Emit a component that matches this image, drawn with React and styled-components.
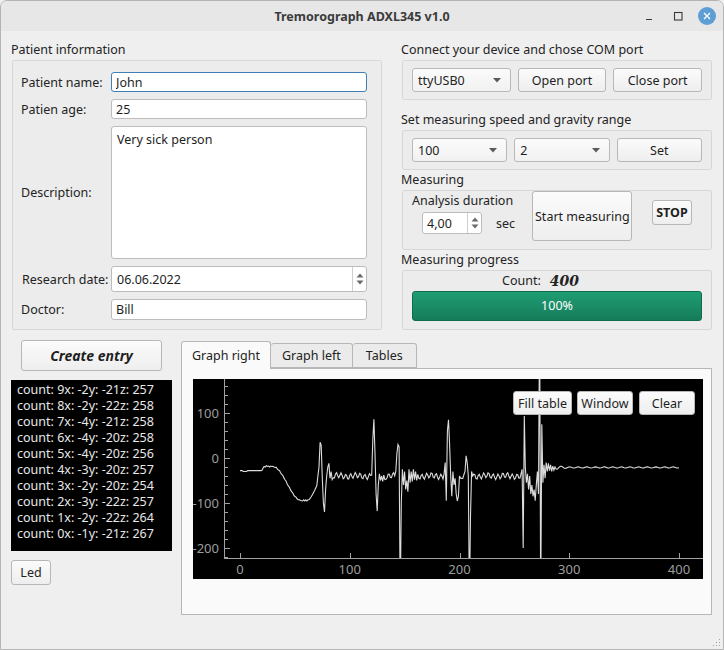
import React from "react";
import styled, { createGlobalStyle, css } from "styled-components";

const GlobalStyle = createGlobalStyle`
  html, body { margin: 0; padding: 0; background: #efefef; }
  body {
    font-family: "Noto Sans", "DejaVu Sans", sans-serif;
    font-size: 12.5px;
    color: #232323;
  }
  * { box-sizing: border-box; }
`;

const Window = styled.div`
  width: 724px;
  height: 650px;
  display: flex;
  flex-direction: column;
  border: 1px solid #b4b4b4;
  border-radius: 7px 7px 0 0;
  background: #efefef;
  overflow: hidden;
  position: relative;
`;

const TitleBar = styled.div`
  height: 30px;
  flex: none;
  display: grid;
  grid-template-columns: 1fr auto 1fr;
  align-items: center;
  background: #e7e7e7;
`;

const Title = styled.div`
  grid-column: 2;
  font-weight: 700;
  font-size: 12.5px;
  color: #3b3b3b;
`;

const WinControls = styled.div`
  justify-self: end;
  display: flex;
  align-items: center;
  gap: 11px;
  padding-right: 7px;
`;

const CtrlIcon = styled.span`
  width: 18px;
  height: 18px;
  display: flex;
  align-items: center;
  justify-content: center;
  border-radius: 50%;
  background: ${({ $close }) => ($close ? "#5d9fd5" : "transparent")};
`;

const Body = styled.div`
  flex: 1;
  display: flex;
  flex-direction: column;
  gap: 10px;
  padding: 9px 11px 0 10px;
`;

const TopRow = styled.div`
  display: flex;
  gap: 19px;
`;

const Panel = styled.div`
  width: ${({ $w }) => $w}px;
  display: flex;
  flex-direction: column;
`;

const SectionTitle = styled.div`
  height: 20px;
  line-height: 19px;
  white-space: nowrap;
`;

const GroupBox = styled.div`
  border: 1px solid #d7d7d7;
  border-radius: 2px;
  background: #ececec;
  margin-left: 1px;
  margin-bottom: ${({ $mb }) => $mb || 0}px;
`;

const FormGrid = styled(GroupBox)`
  display: grid;
  grid-template-columns: 90px 1fr;
  grid-template-rows: 20px 20px 133px 26px 21px;
  row-gap: 7px;
  align-items: center;
  padding: 11px 14px 9px 8px;
`;

const FieldLabel = styled.label`
  white-space: nowrap;
  padding-left: ${({ $indent }) => $indent || 0}px;
`;

const inputBase = css`
  font: inherit;
  color: #1e1e1e;
  background: #fff;
  border: 1px solid #bcbcbc;
  border-radius: 3px;
  outline: none;
`;

const TextInput = styled.input`
  ${inputBase};
  height: 100%;
  width: 100%;
  padding: 0 4px;
  border-color: ${({ $focused }) => ($focused ? "#3f7fb5" : "#bcbcbc")};
`;

const TextArea = styled.textarea`
  ${inputBase};
  height: 100%;
  width: 100%;
  resize: none;
  padding: 4px 5px;
`;

const SpinWrap = styled.div`
  ${inputBase};
  display: flex;
  height: ${({ $h }) => $h}px;
  width: ${({ $w }) => ($w ? `${$w}px` : "100%")};
  margin-left: ${({ $ml }) => $ml || 0}px;
`;

const SpinValue = styled.div`
  flex: 1;
  display: flex;
  align-items: center;
  padding-left: ${({ $pl }) => $pl || 4}px;
`;

const SpinArrows = styled.div`
  width: 14px;
  border-left: 1px solid #cfcfcf;
  display: flex;
  align-items: center;
  justify-content: center;
`;

const Row = styled(GroupBox)`
  display: flex;
  gap: 7px;
  padding: 7px 9px 7px 9px;
`;

const Combo = styled.div`
  flex: 1;
  height: 24px;
  display: flex;
  align-items: center;
  justify-content: space-between;
  padding: 0 9px 0 5px;
  border: 1px solid #b9b9b9;
  border-radius: 3px;
  background: linear-gradient(#fbfbfb, #f1f1f1);
`;

const Button = styled.button`
  font: inherit;
  font-size: ${({ $size }) => $size || 12.5}px;
  font-weight: ${({ $bold }) => ($bold ? 700 : 400)};
  font-style: ${({ $italic }) => ($italic ? "italic" : "normal")};
  color: #1e1e1e;
  flex: ${({ $flex }) => ($flex ? 1 : "none")};
  width: ${({ $w }) => ($w ? `${$w}px` : "auto")};
  height: ${({ $h }) => $h || 24}px;
  margin: ${({ $m }) => $m || 0};
  padding: 0 2px;
  border: 1px solid #b7b7b7;
  border-radius: 3px;
  background: linear-gradient(#fbfbfb, #eeeeee);
  white-space: nowrap;
`;

const MeasureBox = styled(GroupBox)`
  height: 60px;
  display: flex;
  align-items: flex-start;
  padding: 0 9px;
`;

const DurationCol = styled.div`
  width: 120px;
  display: flex;
  flex-direction: column;
  gap: 3px;
  padding-top: 1px;
`;

const DurationRow = styled.div`
  display: flex;
  align-items: center;
  gap: 14px;
`;

const ProgressBox = styled(GroupBox)`
  height: 60px;
  padding: 0 9px 8px;
  display: flex;
  flex-direction: column;
`;

const CountRow = styled.div`
  height: 20px;
  display: flex;
  align-items: center;
  gap: 9px;
  padding-left: 90px;
`;

const CountValue = styled.span`
  font-family: "DejaVu Serif", "Liberation Serif", serif;
  font-weight: 700;
  font-style: italic;
  font-size: 14px;
`;

const Progress = styled.div`
  height: 31px;
  display: flex;
  align-items: center;
  justify-content: center;
  color: #fff;
  border: 1px solid #0f6c4c;
  border-radius: 3px;
  background: linear-gradient(#1f9d72, #157c5a);
`;

const BottomRow = styled.div`
  display: flex;
  gap: 9px;
`;

const LeftCol = styled.div`
  width: 161px;
  display: flex;
  flex-direction: column;
  align-items: flex-start;
  gap: 9px;
`;

const LogList = styled.div`
  width: 161px;
  height: 171px;
  background: #000;
  color: #e8e8e8;
  padding: 2px 6px;
  line-height: 16px;
`;

const Tabs = styled.div`
  width: 531px;
  display: flex;
  flex-direction: column;
`;

const TabBar = styled.div`
  display: flex;
  align-items: flex-end;
  height: 28px;
`;

const Tab = styled.div`
  height: ${({ $active }) => ($active ? 28 : 25)}px;
  padding: 0 ${({ $pad }) => $pad}px;
  display: flex;
  align-items: center;
  border: 1px solid #b7b7b7;
  border-bottom: ${({ $active }) => ($active ? "none" : "1px solid #b7b7b7")};
  border-left: ${({ $first, $active }) => ($first || $active ? "1px solid #b7b7b7" : "none")};
  border-radius: 3px 3px 0 0;
  background: ${({ $active }) => ($active ? "#fafafa" : "#ebebeb")};
  position: relative;
  z-index: ${({ $active }) => ($active ? 1 : 0)};
  margin-bottom: ${({ $active }) => ($active ? -1 : 0)}px;
`;

const TabPane = styled.div`
  height: 247px;
  background: #fafafa;
  border: 1px solid #b7b7b7;
  padding: 10px 8px 0 11px;
`;

const GraphBox = styled.div`
  position: relative;
  width: 510px;
  height: 200px;
  background: #000;
`;

const GraphButtons = styled.div`
  position: absolute;
  top: 12px;
  right: 8px;
  display: flex;
  gap: 5px;
`;

const Grip = styled.svg`
  position: absolute;
  right: 2px;
  bottom: 2px;
`;

const Caret = () => (
  <svg width="8" height="5" viewBox="0 0 8 5">
    <path d="M0 0 L8 0 L4 4.5 Z" fill="#5a5a5a" />
  </svg>
);

const UpDown = () => (
  <svg width="8" height="14" viewBox="0 0 8 14">
    <path d="M0.5 5.5 L4 1.5 L7.5 5.5 Z" fill="#6a6a6a" />
    <path d="M0.5 8.5 L4 12.5 L7.5 8.5 Z" fill="#6a6a6a" />
  </svg>
);

const hump = [-27, -23, -19, -20, -17, -19, -18, -20, -18, -19];

const base = (x) => {
  if (x < 20) return x >= 3 && x <= 6 ? -30 : -28;
  if (x < 30) return hump[x - 20];
  if (x <= 56) {
    const t = (x - 30) / 26;
    return -20 - (75 * (1 - Math.cos(Math.PI * t))) / 2 + (x % 3 === 0 ? 1.5 : 0);
  }
  if (x <= 62) return -94 + (x % 2 ? -1.5 : 1);
  if (x < 72) return -94 + 45 * ((x - 62) / 10) ** 1.4;
  if (x < 288) return -40 + 6 * Math.sin(x * 1.45) + 2 * Math.sin(x * 0.37);
  const decay = Math.max(0, (300 - x) / 12);
  return -21 + (1.2 + 3 * decay) * Math.sin(x * 0.8);
};

const spikes = {
  71: -40, 72: -20, 73: 35, 74: 28, 75: -45, 76: -100, 77: -120, 78: -70, 79: -40,
  80: -20, 81: -12, 82: -45, 83: -30, 84: -48,
  120: -38, 121: 40, 122: 86, 123: 10, 124: -80, 125: -118, 126: -60, 127: -35,
  128: -50, 129: -40, 130: -52, 131: -38, 132: -48,
  142: -30, 143: 10, 144: 30, 145: 25, 146: -320, 147: -100, 148: -25, 149: -60,
  150: -30, 151: -70, 152: -50, 153: -75, 154: -25, 155: -55, 156: -30, 157: -52,
  158: -25, 159: -48, 160: -30, 161: -50,
  186: -35, 187: -10, 188: -95, 189: 60, 190: 85, 191: 30, 192: -40, 193: -85,
  194: -30, 195: -60, 196: -45, 197: -80, 198: -95, 199: -85, 200: -40, 201: -45,
  205: -30, 206: 5, 207: -10, 208: -40, 209: -320, 210: -130, 211: -30, 212: -40,
  256: -35, 257: -25, 258: -200, 259: 93, 260: -20, 261: -55, 262: -35, 263: -70,
  264: -40, 265: -80, 266: -60, 267: -85, 268: -70, 269: -95, 270: -60, 271: -30,
  272: -80, 273: 330, 274: -330, 275: 75, 276: -55, 277: -15, 278: -45, 279: -10,
  280: -30, 281: -12, 282: -28, 283: -15, 284: -30, 285: -18, 286: -27, 287: -20,
};

const signal = Array.from({ length: 401 }, (_, x) => [x, spikes[x] ?? base(x)]);

const toX = (v) => 47 + v * 1.0975;
const toY = (v) => 79 - v * 0.45;

const Plot = () => {
  const pts = signal.map(([x, y]) => `${toX(x).toFixed(1)},${toY(y).toFixed(1)}`).join(" ");
  const yTicks = [];
  for (let v = -220; v <= 160; v += 20) yTicks.push(v);
  return (
    <svg width="510" height="200" viewBox="0 0 510 200">
      <defs>
        <clipPath id="plotArea">
          <rect x="31" y="0" width="479" height="179" />
        </clipPath>
      </defs>
      <g stroke="#a2a2a2" strokeWidth="1" shapeRendering="crispEdges">
        <line x1="31.5" y1="0" x2="31.5" y2="179.5" />
        <line x1="31" y1="179.5" x2="510" y2="179.5" />
        {yTicks.map((v) => (
          <line key={v} x1="31.5" x2={v % 100 === 0 ? 37 : 34.5} y1={Math.round(toY(v)) + 0.5} y2={Math.round(toY(v)) + 0.5} />
        ))}
        {[0, 100, 200, 300, 400].map((v) => (
          <line key={v} x1={Math.round(toX(v)) + 0.5} x2={Math.round(toX(v)) + 0.5} y1="179" y2="174" />
        ))}
      </g>
      <g fill="#9d9d9d" fontFamily="Noto Sans, DejaVu Sans, sans-serif" fontSize="13">
        {[100, 0, -100, -200].map((v) => (
          <text key={v} x="26" y={toY(v) + 4.5} textAnchor="end">{v}</text>
        ))}
        {[0, 100, 200, 300, 400].map((v) => (
          <text key={v} x={toX(v)} y="195" textAnchor="middle">{v}</text>
        ))}
      </g>
      <polyline points={pts} fill="none" stroke="#dcdcdc" strokeWidth="1.1" clipPath="url(#plotArea)" />
    </svg>
  );
};

const logLines = [
  "count: 9x: -2y: -21z: 257",
  "count: 8x: -2y: -22z: 258",
  "count: 7x: -4y: -21z: 258",
  "count: 6x: -4y: -20z: 258",
  "count: 5x: -4y: -20z: 256",
  "count: 4x: -3y: -20z: 257",
  "count: 3x: -2y: -20z: 254",
  "count: 2x: -3y: -22z: 257",
  "count: 1x: -2y: -22z: 264",
  "count: 0x: -1y: -21z: 267",
];

export default function App() {
  return (
    <>
      <GlobalStyle />
      <Window>
        <TitleBar>
          <Title>Tremorograph ADXL345 v1.0</Title>
          <WinControls>
            <CtrlIcon>
              <svg width="10" height="10" viewBox="0 0 10 10">
                <line x1="2" y1="8.5" x2="8" y2="8.5" stroke="#3a3a3a" strokeWidth="1.2" />
              </svg>
            </CtrlIcon>
            <CtrlIcon>
              <svg width="10" height="10" viewBox="0 0 10 10">
                <rect x="1.5" y="1.5" width="7.5" height="7.5" fill="none" stroke="#3a3a3a" strokeWidth="1.1" />
              </svg>
            </CtrlIcon>
            <CtrlIcon $close>
              <svg width="10" height="10" viewBox="0 0 10 10">
                <path d="M2 2 L8 8 M8 2 L2 8" stroke="#fff" strokeWidth="1.3" />
              </svg>
            </CtrlIcon>
          </WinControls>
        </TitleBar>

        <Body>
          <TopRow>
            <Panel $w={371}>
              <SectionTitle>Patient information</SectionTitle>
              <FormGrid>
                <FieldLabel>Patient name:</FieldLabel>
                <TextInput defaultValue="John" $focused />
                <FieldLabel>Patien age:</FieldLabel>
                <TextInput defaultValue="25" />
                <FieldLabel>Description:</FieldLabel>
                <TextArea defaultValue="Very sick person" />
                <FieldLabel $indent={1}>Research date:</FieldLabel>
                <SpinWrap $h={26}>
                  <SpinValue $pl={5}>06.06.2022</SpinValue>
                  <SpinArrows>
                    <UpDown />
                  </SpinArrows>
                </SpinWrap>
                <FieldLabel>Doctor:</FieldLabel>
                <TextInput defaultValue="Bill" />
              </FormGrid>
            </Panel>

            <Panel $w={311}>
              <SectionTitle>Connect your device and chose COM port</SectionTitle>
              <Row $mb={10}>
                <Combo>
                  ttyUSB0
                  <Caret />
                </Combo>
                <Button $flex>Open port</Button>
                <Button $flex>Close port</Button>
              </Row>

              <SectionTitle>Set measuring speed and gravity range</SectionTitle>
              <Row>
                <Combo>
                  100
                  <Caret />
                </Combo>
                <Combo>
                  2
                  <Caret />
                </Combo>
                <Button $flex>Set</Button>
              </Row>

              <SectionTitle>Measuring</SectionTitle>
              <MeasureBox>
                <DurationCol>
                  <span>Analysis duration</span>
                  <DurationRow>
                    <SpinWrap $h={22} $w={60} $ml={10}>
                      <SpinValue>4,00</SpinValue>
                      <SpinArrows>
                        <UpDown />
                      </SpinArrows>
                    </SpinWrap>
                    <span>sec</span>
                  </DurationRow>
                </DurationCol>
                <Button $w={100} $h={50}>Start measuring</Button>
                <Button $w={40} $h={25} $bold $m="9px 0 0 20px">STOP</Button>
              </MeasureBox>

              <SectionTitle>Measuring progress</SectionTitle>
              <ProgressBox>
                <CountRow>
                  <span>Count:</span>
                  <CountValue>400</CountValue>
                </CountRow>
                <Progress>100%</Progress>
              </ProgressBox>
            </Panel>
          </TopRow>

          <BottomRow>
            <LeftCol>
              <Button $w={141} $h={31} $size={14} $bold $italic $m="0 0 0 10px">
                Create entry
              </Button>
              <LogList>
                {logLines.map((l) => (
                  <div key={l}>{l}</div>
                ))}
              </LogList>
              <Button $w={40} $h={25}>Led</Button>
            </LeftCol>

            <Tabs>
              <TabBar>
                <Tab $active $first $pad={10}>Graph right</Tab>
                <Tab $pad={11}>Graph left</Tab>
                <Tab $pad={13}>Tables</Tab>
              </TabBar>
              <TabPane>
                <GraphBox>
                  <Plot />
                  <GraphButtons>
                    <Button $w={59}>Fill table</Button>
                    <Button $w={56}>Window</Button>
                    <Button $w={56} $m="0 0 0 1px">Clear</Button>
                  </GraphButtons>
                </GraphBox>
              </TabPane>
            </Tabs>
          </BottomRow>
        </Body>

        <Grip width="10" height="10" viewBox="0 0 10 10">
          {[[8, 2], [8, 5], [5, 5], [8, 8], [5, 8], [2, 8]].map(([x, y]) => (
            <rect key={`${x}-${y}`} x={x} y={y} width="1" height="1" fill="#a0a0a0" />
          ))}
        </Grip>
      </Window>
    </>
  );
}
